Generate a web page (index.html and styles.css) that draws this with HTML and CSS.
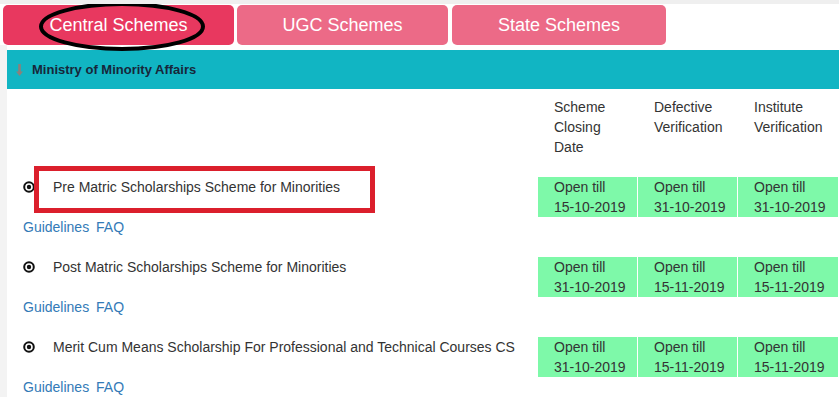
FILE: index.html
```html
<!DOCTYPE html>
<html lang="en">
<head>
	<meta charset="UTF-8">
	<title>Schemes</title>
	<link rel="stylesheet" href="styles.css">
</head>
<body>
	<div class="tabs">
		<a class="tab tab-central active" href="javascript:;">Central Schemes</a>
		<a class="tab tab-ugc" href="javascript:;">UGC Schemes</a>
		<a class="tab tab-state" href="javascript:;">State Schemes</a>
		<svg class="mark-ellipse" width="170" height="52" viewBox="0 0 170 52"><ellipse cx="83" cy="25.5" rx="81" ry="22.5" fill="none" stroke="#000" stroke-width="4"/></svg>
	</div>
	<div class="panel">
		<div class="ministry">
			<svg class="arrow" width="7" height="12" viewBox="0 0 7 12"><path d="M2.2 0h2.6v7.5h2.2l-3.5 4.5-3.5-4.5h2.2z" fill="#8c807b"/></svg>
			<span>Ministry of Minority Affairs</span>
		</div>
		<div class="grid heads">
			<div></div>
			<div class="head">Scheme Closing Date</div>
			<div class="head">Defective Verification</div>
			<div class="head">Institute Verification</div>
		</div>

		<div class="scheme">
			<div class="grid">
				<div class="name"><svg class="dot" width="12" height="12" viewBox="0 0 12 12"><circle cx="6" cy="6" r="4.8" fill="none" stroke="#111" stroke-width="2"/><circle cx="6" cy="6" r="2.2" fill="#111"/></svg>Pre Matric Scholarships Scheme for Minorities</div>
				<div class="open">Open till<br>15-10-2019</div>
				<div class="open">Open till<br>31-10-2019</div>
				<div class="open">Open till<br>31-10-2019</div>
			</div>
			<div class="links"><a href="javascript:;">Guidelines</a> <a href="javascript:;">FAQ</a></div>
			<div class="mark-box"></div>
		</div>

		<div class="scheme">
			<div class="grid">
				<div class="name"><svg class="dot" width="12" height="12" viewBox="0 0 12 12"><circle cx="6" cy="6" r="4.8" fill="none" stroke="#111" stroke-width="2"/><circle cx="6" cy="6" r="2.2" fill="#111"/></svg>Post Matric Scholarships Scheme for Minorities</div>
				<div class="open">Open till<br>31-10-2019</div>
				<div class="open">Open till<br>15-11-2019</div>
				<div class="open">Open till<br>15-11-2019</div>
			</div>
			<div class="links"><a href="javascript:;">Guidelines</a> <a href="javascript:;">FAQ</a></div>
		</div>

		<div class="scheme">
			<div class="grid">
				<div class="name"><svg class="dot" width="12" height="12" viewBox="0 0 12 12"><circle cx="6" cy="6" r="4.8" fill="none" stroke="#111" stroke-width="2"/><circle cx="6" cy="6" r="2.2" fill="#111"/></svg>Merit Cum Means Scholarship For Professional and Technical Courses CS</div>
				<div class="open">Open till<br>31-10-2019</div>
				<div class="open">Open till<br>15-11-2019</div>
				<div class="open">Open till<br>15-11-2019</div>
			</div>
			<div class="links"><a href="javascript:;">Guidelines</a> <a href="javascript:;">FAQ</a></div>
		</div>
	</div>
</body>
</html>
```

FILE: styles.css
```css
* {margin: 0;padding: 0;box-sizing: border-box;}
body {font-family: "Liberation Sans", Arial, sans-serif;font-size: 14px;line-height: 20px;color: #333;background: #fff;border-top: 4px solid #efefef;overflow: hidden;}
a {text-decoration: none;}

.tabs {display: flex;gap: 3px;padding: 1px 0 0 3px;height: 41px;position: relative;}
.tab {display: flex;align-items: center;justify-content: center;height: 40px;border-radius: 5px;color: #fff;font-size: 18px;background: #ec6a87;}
.tab-central {width: 231px;background: #e8385f;}
.tab-ugc {width: 211px;}
.tab-state {width: 214px;margin-left: 1px;}
.mark-ellipse {position: absolute;left: 39px;top: -3px;}

.panel {border-left: 7px solid #f3f3f3;padding-top: 5px;}
.ministry {height: 39px;background: #11b5c3;display: flex;align-items: center;padding-left: 9px;font-size: 13px;font-weight: bold;color: #17273a;}
.ministry .arrow {margin-right: 9px;margin-top: 1px;}

.grid {display: grid;grid-template-columns: 530px 99px 99px 100px;column-gap: 1px;}
.heads {padding-top: 8px;margin-bottom: 20px;}
.head {padding-left: 16px;padding-right: 8px;}

.scheme {position: relative;margin-bottom: 20px;}
.scheme:last-child {margin-bottom: 0;}
.name {display: flex;align-items: flex-start;padding-left: 16px;}
.name .dot {margin: 4px 18px 0 0;flex-shrink: 0;}
.open {background: #7ef9a9;padding-left: 16px;height: 40px;}
.links {padding-left: 16px;height: 20px;}
.links a {color: #337ab7;margin-right: 3px;}
.mark-box {position: absolute;left: 27px;top: -11px;width: 341px;height: 47px;border: 5px solid #db1f2c;}
```
